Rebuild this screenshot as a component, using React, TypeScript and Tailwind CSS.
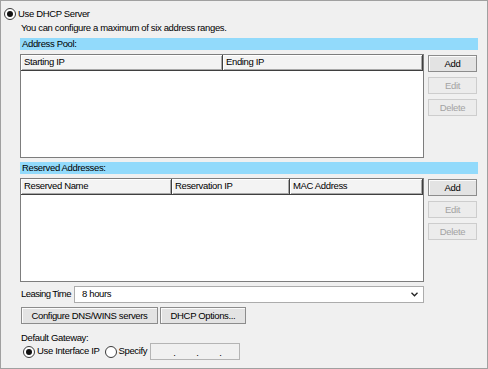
import React from 'react';

// classic Windows-style dialog panel: DHCP server settings

const Radio: React.FC<{ checked?: boolean }> = ({ checked }) => (
  <span className="w-[12px] h-[12px] rounded-full border border-[#3a3a3a] bg-white flex items-center justify-center shrink-0">
    {checked && <span className="w-[6px] h-[6px] rounded-full bg-[#111]" />}
  </span>
);

const Btn: React.FC<{ children: React.ReactNode; disabled?: boolean; className?: string }> = ({
  children,
  disabled,
  className = '',
}) => (
  <button
    type="button"
    className={`h-[17px] flex items-center justify-center border leading-none ${
      disabled
        ? 'border-[#cdcdcd] bg-[#ececec] text-[#a3a3a3]'
        : 'border-[#8c8c8c] bg-[#e3e3e3] text-black shadow-[inset_1px_1px_0_#fbfbfb]'
    } ${className}`}
  >
    {children}
  </button>
);

const Bar: React.FC<{ label: string }> = ({ label }) => (
  <div className="h-[12px] w-[458px] bg-[#92dafb] pl-[2px] leading-[12px]">{label}</div>
);

type Col = { label: string; width?: number };

const Table: React.FC<{ cols: Col[] }> = ({ cols }) => (
  <div className="w-[404px] h-[104px] border border-[#7d7d7d] bg-white flex flex-col">
    <div className="flex h-[16px] bg-[#f3f3f3]">
      {cols.map((c) => (
        <div
          key={c.label}
          style={c.width ? { width: c.width } : undefined}
          className={`${c.width ? 'shrink-0' : 'flex-1'} h-full pl-[3px] flex items-center border-r border-b border-[#3f3f3f] shadow-[inset_1px_1px_0_#ffffff,inset_-1px_-1px_0_#a8a8a8]`}
        >
          {c.label}
        </div>
      ))}
    </div>
    <div className="flex-1" />
  </div>
);

const Side: React.FC = () => (
  <div className="w-[49px] flex flex-col gap-[5px] pt-[1px]">
    <Btn>Add</Btn>
    <Btn disabled>Edit</Btn>
    <Btn disabled>Delete</Btn>
  </div>
);

export default function App() {
  return (
    <div className="w-[488px] h-[369px] border border-[#a0a0a0] bg-[#f0f0f0] text-black font-['Liberation_Sans',Arial,sans-serif] text-[9.5px] tracking-[-0.35px] overflow-hidden">
      <div className="pl-[3px] pt-[7px] flex items-center gap-[2px] h-[19px]">
        <Radio checked />
        <span>Use DHCP Server</span>
      </div>

      <div className="pl-[19px]">
        <div className="h-[12px] mt-[2px] pl-[1px] leading-[12px]">
          You can configure a maximum of six address ranges.
        </div>

        <div className="mt-[4px]">
          <Bar label="Address Pool:" />
        </div>
        <div className="mt-[4px] flex gap-[4px]">
          <Table cols={[{ label: 'Starting IP', width: 202 }, { label: 'Ending IP' }]} />
          <Side />
        </div>

        <div className="mt-[4px]">
          <Bar label="Reserved Addresses:" />
        </div>
        <div className="mt-[4px] flex gap-[4px]">
          <Table
            cols={[
              { label: 'Reserved Name', width: 151 },
              { label: 'Reservation IP', width: 118 },
              { label: 'MAC Address' },
            ]}
          />
          <Side />
        </div>

        <div className="mt-[4px] flex items-center h-[17px]">
          <span className="w-[54px] pl-[1px] whitespace-nowrap tracking-[-0.55px]">Leasing Time</span>
          <div className="w-[350px] h-[17px] bg-white border border-[#acacac] flex items-center pl-[7px] pr-[5px]">
            <span className="flex-1">8 hours</span>
            <svg width="7" height="5" viewBox="0 0 7 5" className="text-[#222]">
              <path d="M0.5 0.8 L3.5 3.8 L6.5 0.8" fill="none" stroke="currentColor" strokeWidth="1.3" />
            </svg>
          </div>
        </div>

        <div className="mt-[4px] flex gap-[2px] pl-[1px]">
          <Btn className="w-[137px]">Configure DNS/WINS servers</Btn>
          <Btn className="w-[86px]">DHCP Options...</Btn>
        </div>

        <div className="mt-[8px] h-[11px] leading-[11px] pl-[1px]">Default Gateway:</div>
        <div className="h-[17px] flex items-center pl-[3px]">
          <Radio checked />
          <span className="ml-[2px]">Use Interface IP</span>
          <span className="ml-[5px]">
            <Radio />
          </span>
          <span className="ml-[2px]">Specify</span>
          <div className="ml-[3px] w-[90px] h-[17px] border border-[#b4b4b4] bg-[#f0f0f0] flex items-center gap-[20px] pl-[22px] pt-[3px]">
            <span className="w-[3px]">.</span>
            <span className="w-[3px]">.</span>
            <span className="w-[3px]">.</span>
          </div>
        </div>
      </div>
    </div>
  );
}
